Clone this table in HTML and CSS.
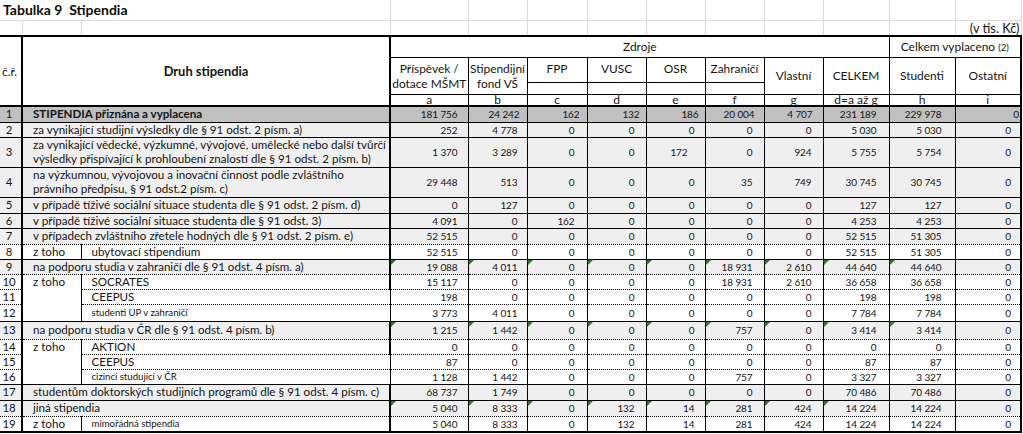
FILE: index.html
```html
<!DOCTYPE html>
<html lang="cs">
<head>
<meta charset="utf-8">
<title>Tabulka 9 Stipendia</title>
<link rel="stylesheet" href="styles.css">
</head>
<body>
<table class="sheet">
<colgroup>
<col class="w-nr"><col class="w-zt"><col class="w-druh"><col class="w-a"><col class="w-b"><col class="w-c"><col class="w-d"><col class="w-e"><col class="w-f"><col class="w-g"><col class="w-tot"><col class="w-h"><col class="w-i">
</colgroup>
<thead>
<tr class="grid r0">
<td class="title" colspan="3">Tabulka 9&nbsp; Stipendia</td>
<td></td><td></td><td></td><td></td><td></td><td></td><td></td><td></td><td></td><td></td>
</tr>
<tr class="grid r1">
<td></td><td></td><td></td><td></td><td></td><td></td><td></td><td></td><td></td><td></td><td></td><td></td>
<td class="unit">(v tis. Kč)</td>
</tr>
<tr class="hd h1">
<td class="nr-h" rowspan="4">č.ř.</td>
<td class="druh-h" rowspan="4" colspan="2">Druh stipendia</td>
<td colspan="8">Zdroje</td>
<td colspan="2" class="last">Celkem vyplaceno <span class="sm">(2)</span></td>
</tr>
<tr class="hd h2">
<td rowspan="2">Příspěvek /<br>dotace MŠMT</td>
<td rowspan="2">Stipendijní<br>fond VŠ</td>
<td class="top">FPP</td>
<td class="top">VUSC</td>
<td class="top">OSR</td>
<td class="top">Zahraničí</td>
<td rowspan="2">Vlastní</td>
<td rowspan="2">CELKEM</td>
<td rowspan="2">Studenti</td>
<td rowspan="2" class="last">Ostatní</td>
</tr>
<tr class="hd h3"><td></td><td></td><td></td><td></td></tr>
<tr class="hd h4"><td>a</td><td>b</td><td>c</td><td>d</td><td>e</td><td>f</td><td>g</td><td>d=a až g</td><td>h</td><td class="last">i</td></tr>
</thead>
<tbody class="body">
<tr class="dark first h16">
<td class="nr">1</td><td class="tx bold" colspan="2">STIPENDIA přiznána a vyplacena</td>
<td>181&nbsp;756</td><td>24&nbsp;242</td><td>162</td><td>132</td><td>186</td><td>20&nbsp;004</td><td>4&nbsp;707</td><td>231&nbsp;189</td><td>229&nbsp;978</td><td>0</td>
</tr>
<tr class="lt h15">
<td class="nr">2</td><td class="tx" colspan="2">za vynikající studijní výsledky dle § 91 odst. 2 písm. a)</td>
<td>252</td><td>4&nbsp;778</td><td>0</td><td>0</td><td>0</td><td>0</td><td>0</td><td>5&nbsp;030</td><td>5&nbsp;030</td><td>0</td>
</tr>
<tr class="lt h30">
<td class="nr">3</td><td class="tx" colspan="2">za vynikající vědecké, výzkumné, vývojové, umělecké nebo další tvůrčí<br>výsledky přispívající k prohloubení znalostí dle § 91 odst. 2 písm. b)</td>
<td>1&nbsp;370</td><td>3&nbsp;289</td><td>0</td><td>0</td><td class="shift">172</td><td>0</td><td>924</td><td>5&nbsp;755</td><td>5&nbsp;754</td><td>0</td>
</tr>
<tr class="lt h30">
<td class="nr">4</td><td class="tx" colspan="2">na výzkumnou, vývojovou a inovační činnost podle zvláštního<br>právního předpisu, § 91 odst.2 písm. c)</td>
<td>29&nbsp;448</td><td>513</td><td>0</td><td>0</td><td>0</td><td>35</td><td>749</td><td>30&nbsp;745</td><td>30&nbsp;745</td><td>0</td>
</tr>
<tr class="lt h16">
<td class="nr">5</td><td class="tx" colspan="2">v případě tíživé sociální situace studenta dle § 91 odst. 2 písm. d)</td>
<td>0</td><td>127</td><td>0</td><td>0</td><td>0</td><td>0</td><td>0</td><td>127</td><td>127</td><td>0</td>
</tr>
<tr class="lt h15">
<td class="nr">6</td><td class="tx" colspan="2">v případě tíživé sociální situace studenta dle § 91 odst. 3)</td>
<td>4&nbsp;091</td><td>0</td><td>162</td><td>0</td><td>0</td><td>0</td><td>0</td><td>4&nbsp;253</td><td>4&nbsp;253</td><td>0</td>
</tr>
<tr class="lt dot h16">
<td class="nr">7</td><td class="tx" colspan="2">v případech zvláštního zřetele hodných dle § 91 odst. 2 písm. e)</td>
<td>52&nbsp;515</td><td>0</td><td>0</td><td>0</td><td>0</td><td>0</td><td>0</td><td>52&nbsp;515</td><td>51&nbsp;305</td><td>0</td>
</tr>
<tr class="h15">
<td class="nr">8</td><td class="tx">z toho</td><td class="tx">ubytovací stipendium</td>
<td>52&nbsp;515</td><td>0</td><td>0</td><td>0</td><td>0</td><td>0</td><td>0</td><td>52&nbsp;515</td><td>51&nbsp;305</td><td>0</td>
</tr>
<tr class="lt dot h15">
<td class="nr">9</td><td class="tx" colspan="2">na podporu studia v zahraničí dle § 91 odst. 4 písm. a)</td>
<td class="e">19&nbsp;088</td><td class="e">4&nbsp;011</td><td class="e">0</td><td class="e">0</td><td class="e">0</td><td class="e">18&nbsp;931</td><td class="e">2&nbsp;610</td><td class="e">44&nbsp;640</td><td class="e">44&nbsp;640</td><td>0</td>
</tr>
<tr class="dot h15">
<td class="nr">10</td><td class="tx zt-span" rowspan="3">z toho</td><td class="tx">SOCRATES</td>
<td>15&nbsp;117</td><td>0</td><td>0</td><td>0</td><td>0</td><td>18&nbsp;931</td><td>2&nbsp;610</td><td>36&nbsp;658</td><td>36&nbsp;658</td><td>0</td>
</tr>
<tr class="dot h15">
<td class="nr">11</td><td class="tx">CEEPUS</td>
<td>198</td><td>0</td><td>0</td><td>0</td><td>0</td><td>0</td><td>0</td><td>198</td><td>198</td><td>0</td>
</tr>
<tr class="h17">
<td class="nr">12</td><td class="tx small">studenti UP v zahraničí</td>
<td>3&nbsp;773</td><td>4&nbsp;011</td><td>0</td><td>0</td><td>0</td><td>0</td><td>0</td><td>7&nbsp;784</td><td>7&nbsp;784</td><td>0</td>
</tr>
<tr class="lt dot h18">
<td class="nr">13</td><td class="tx" colspan="2">na podporu studia v ČR dle § 91 odst. 4 písm. b)</td>
<td class="e">1&nbsp;215</td><td class="e">1&nbsp;442</td><td class="e">0</td><td class="e">0</td><td class="e">0</td><td class="e">757</td><td class="e">0</td><td class="e">3&nbsp;414</td><td class="e">3&nbsp;414</td><td>0</td>
</tr>
<tr class="dot h15">
<td class="nr">14</td><td class="tx zt-span" rowspan="3">z toho</td><td class="tx">AKTION</td>
<td>0</td><td>0</td><td>0</td><td>0</td><td>0</td><td>0</td><td>0</td><td>0</td><td>0</td><td>0</td>
</tr>
<tr class="dot h15">
<td class="nr">15</td><td class="tx">CEEPUS</td>
<td>87</td><td>0</td><td>0</td><td>0</td><td>0</td><td>0</td><td>0</td><td>87</td><td>87</td><td>0</td>
</tr>
<tr class="h15">
<td class="nr">16</td><td class="tx small">cizinci studující v ČR</td>
<td>1&nbsp;128</td><td>1&nbsp;442</td><td>0</td><td>0</td><td>0</td><td>757</td><td>0</td><td>3&nbsp;327</td><td>3&nbsp;327</td><td>0</td>
</tr>
<tr class="lt h16">
<td class="nr">17</td><td class="tx" colspan="2">studentům doktorských studijních programů dle § 91 odst. 4 písm. c)</td>
<td>68&nbsp;737</td><td>1&nbsp;749</td><td>0</td><td>0</td><td>0</td><td>0</td><td>0</td><td>70&nbsp;486</td><td>70&nbsp;486</td><td>0</td>
</tr>
<tr class="lt dot h16">
<td class="nr">18</td><td class="tx" colspan="2">jiná stipendia</td>
<td class="e">5&nbsp;040</td><td class="e">8&nbsp;333</td><td class="e">0</td><td class="e">132</td><td class="e">14</td><td class="e">281</td><td class="e">424</td><td class="e">14&nbsp;224</td><td>14&nbsp;224</td><td>0</td>
</tr>
<tr class="h15">
<td class="nr">19</td><td class="tx">z toho</td><td class="tx small">mimořádná stipendia</td>
<td>5&nbsp;040</td><td>8&nbsp;333</td><td>0</td><td>132</td><td>14</td><td>281</td><td>424</td><td>14&nbsp;224</td><td>14&nbsp;224</td><td>0</td>
</tr>
</tbody>
</table>
</body>
</html>
```

FILE: styles.css
```css
* { box-sizing: border-box; }
html, body { margin: 0; padding: 0; background: #ffffff; }
body {
  font-family: Lato, "Liberation Sans", sans-serif;
  color: #141414;
}

.sheet {
  border-collapse: collapse;
  table-layout: fixed;
  width: 1022px;
}
.sheet td {
  padding: 0;
  border: 0;
  white-space: nowrap;
  overflow: hidden;
  font-size: 11.6px;
  line-height: 14px;
}

.w-nr { width: 22px; }
.w-zt { width: 59px; }
.w-druh { width: 309px; }
.w-a { width: 78px; }
.w-b { width: 59px; }
.w-c { width: 60px; }
.w-d { width: 59px; }
.w-e { width: 59px; }
.w-f { width: 59px; }
.w-g { width: 59px; }
.w-tot { width: 66px; }
.w-h { width: 66px; }
.w-i { width: 66px; }

/* spreadsheet gridlines above the table */
.grid td {
  border-right: 1px solid #dadada;
  border-bottom: 1px solid #dadada;
}
.r0 { height: 20px; }
.r1 { height: 16px; }
.sheet td.title {
  font-weight: 700;
  font-size: 14px;
  line-height: 16px;
  vertical-align: bottom;
  padding: 0 0 2px 3px;
  color: #0c0c0c;
}
.sheet td.unit {
  font-size: 12.8px;
  text-align: right;
  vertical-align: bottom;
  padding: 0 1px 0 0;
  overflow: visible;
}

/* header */
.hd td {
  border-right: 1px solid #000;
  border-bottom: 1px solid #000;
  text-align: center;
  vertical-align: middle;
}
.sheet .hd td {
  font-size: 11.9px;
  line-height: 15px;
}
.h1 td { border-top: 2px solid #000; }
.h1 { height: 21px; }
.h2 { height: 25px; }
.h3 { height: 12px; }
.h4 { height: 12px; }
.hd .top { vertical-align: top; padding-top: 3px; }
.sheet .h4 td {
  border-bottom: 2px solid #000;
  line-height: 10px;
  font-size: 12px;
  overflow: visible;
}
.hd .nr-h {
  border-right: 2px solid #000;
  border-bottom: 2px solid #000;
  text-align: left;
  padding-left: 2px;
}
.sheet .hd .druh-h {
  border-right: 2px solid #000;
  border-bottom: 2px solid #000;
  font-weight: 700;
  font-size: 12.9px;
}
.hd .last { border-right: 2px solid #000; }
.sm { font-size: 9.5px; }

/* body rows */
.h15 { height: 15px; }
.h16 { height: 16px; }
.h17 { height: 17px; }
.h18 { height: 18px; }
.h30 { height: 30px; }

.sheet .body td {
  border-right: 1px solid #000;
  border-bottom: 1px solid #000;
  text-align: right;
  vertical-align: middle;
  font-size: 10px;
  letter-spacing: -0.1px;
  position: relative;
}
.sheet .body tr.dot > td { border-bottom-style: dotted; }
.sheet .body tr > td.zt-span { border-bottom-style: solid; vertical-align: top; }
.sheet .body tr > td:last-child { border-right: 2px solid #000; }
.sheet .body tr:last-child > td { border-bottom: 2px solid #000; }

.body tr.dark > td { background: #c0c0c0; }
.body tr.lt > td { background: #efefef; }

.sheet .body td.nr {
  border-right: 2px solid #000;
  text-align: center;
  padding-right: 3px;
  font-size: 11.4px;
  letter-spacing: 0;
}
.sheet .body td.tx {
  text-align: left;
  padding-left: 10px;
  font-size: 11.6px;
  letter-spacing: 0;
}
.sheet .body td.tx[colspan="2"], .sheet .body td.tx + td.tx { border-right: 2px solid #000; }
.sheet .body td.bold { font-weight: 700; }
.sheet .body td.small { font-size: 9.6px; }

/* numeric column right padding */
.body td:nth-last-child(10) { padding-right: 10px; }
.body td:nth-last-child(9) { padding-right: 9px; }
.body td:nth-last-child(8) { padding-right: 12px; }
.body td:nth-last-child(7) { padding-right: 11px; }
.body td:nth-last-child(6) { padding-right: 10px; }
.body td:nth-last-child(5) { padding-right: 11px; }
.body td:nth-last-child(4) { padding-right: 11px; }
.body td:nth-last-child(3) { padding-right: 12px; }
.body td:nth-last-child(2) { padding-right: 13px; }
.body td:nth-last-child(1) { padding-right: 9px; }
.body tr.first td:nth-last-child(9) { padding-right: 7px; }
.body tr.first td:nth-last-child(8) { padding-right: 7px; }
.body tr.first td:nth-last-child(7) { padding-right: 6px; }
.body tr.first td:nth-last-child(6) { padding-right: 6px; }
.body tr.first td:nth-last-child(5) { padding-right: 9px; }
.body tr.first td:nth-last-child(4) { padding-right: 10px; }
.body tr.first td:nth-last-child(1) { padding-right: 1px; }
.body tr td.shift { padding-right: 17px; }

/* Excel "number stored as text" markers */
.body td.e::before {
  content: "";
  position: absolute;
  top: 0;
  left: 0;
  width: 0;
  height: 0;
  border-top: 5px solid #2d7a24;
  border-right: 5px solid transparent;
}
```
